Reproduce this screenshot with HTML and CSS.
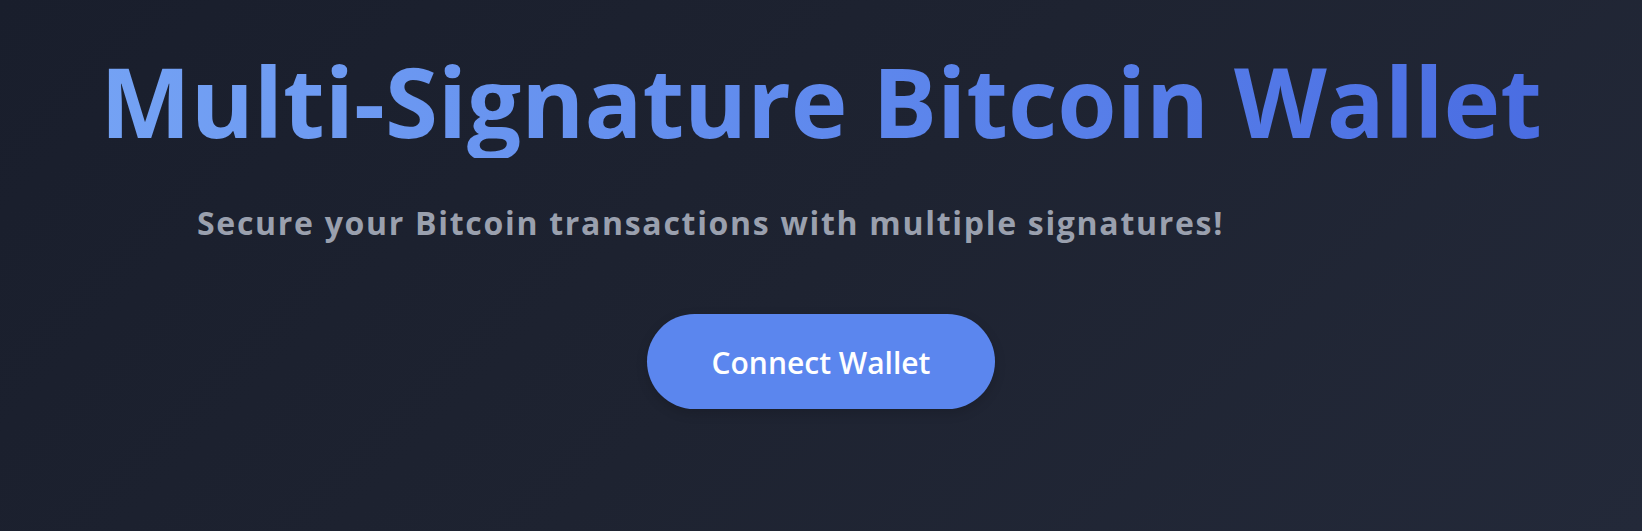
FILE: index.html
```html
<!DOCTYPE html>
<html lang="en">
<head>
<meta charset="utf-8">
<title>Multi-Signature Bitcoin Wallet</title>
<link rel="stylesheet" href="styles.css">
</head>
<body>
<main class="hero">
  <h1 class="title">Multi-Signature Bitcoin Wallet</h1>
  <div class="subtitle-wrap">
    <p class="subtitle">Secure your Bitcoin transactions with multiple signatures!</p>
  </div>
  <button class="connect-btn" type="button">Connect Wallet</button>
</main>
</body>
</html>
```

FILE: styles.css
```css
html, body {
  margin: 0;
  padding: 0;
  height: 100%;
}

body {
  background: linear-gradient(135deg, #191e2c 0%, #1e2331 50%, #232939 100%);
  font-family: "Open Sans", "Noto Sans", sans-serif;
  overflow: hidden;
}

.hero {
  display: flex;
  flex-direction: column;
  align-items: center;
  min-height: 100vh;
}

.title {
  margin: 0;
  padding-top: 43px;
  font-size: 96px;
  line-height: 1.2;
  font-weight: 700;
  letter-spacing: 0;
  background: linear-gradient(90deg, #74a2f4 0%, #5f89ed 50%, #4a6de2 100%);
  -webkit-background-clip: text;
  background-clip: text;
  color: transparent;
  white-space: nowrap;
}

.subtitle-wrap {
  width: 1248px;
  margin-top: 46px;
}

.subtitle {
  margin: 0;
  font-size: 32px;
  line-height: 1.2;
  font-weight: 700;
  color: #9aa0ae;
  white-space: nowrap;
  letter-spacing: 1.7px;
}

.connect-btn {
  margin-top: 71px;
  width: 348px;
  height: 95px;
  border: none;
  border-radius: 48px;
  background: #5b86ee;
  color: #ffffff;
  font-family: "Open Sans", "Noto Sans", sans-serif;
  font-size: 30px;
  font-weight: 600;
  padding: 3px 0 0;
  box-shadow: 0 4px 12px rgba(0, 0, 0, 0.15);
  cursor: pointer;
}
```
